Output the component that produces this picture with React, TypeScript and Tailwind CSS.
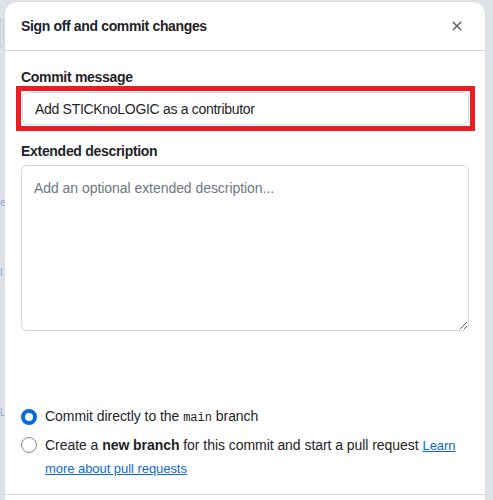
import React from 'react';

export default function App() {
  return (
    <div className="relative w-[493px] h-[500px] overflow-hidden bg-[#dfe2e6] font-['Liberation_Sans',sans-serif] text-[#1f2328]">
      {/* faded page behind the dialog */}
      <div className="absolute left-0 top-[18px] w-[4px] h-[30px] rounded-r border border-[#c9d0d8]" />
      <div className="absolute left-0 top-[195px] text-[10px] text-[#7fa5d6]">e</div>
      <div className="absolute left-0 top-[265px] text-[10px] text-[#7fa5d6]">I</div>
      <div className="absolute left-0 top-[405px] text-[10px] text-[#7fa5d6]">L</div>

      <div className="relative ml-[5px] mt-[2px] w-[480px] h-[520px] rounded-t-xl bg-white shadow-[0_0_0_1px_rgba(208,215,222,0.5)] flex flex-col">
        <div className="h-[49px] shrink-0 border-b border-[#d1d9e0] pl-4 pr-5 flex items-center justify-between">
          <h2 className="text-[14px] font-semibold tracking-[-0.35px]">Sign off and commit changes</h2>
          <svg width="16" height="16" viewBox="0 0 16 16" className="text-[#59636e]" fill="currentColor">
            <path d="M3.72 3.72a.75.75 0 0 1 1.06 0L8 6.94l3.22-3.22a.749.749 0 0 1 1.275.326.749.749 0 0 1-.215.734L9.06 8l3.22 3.22a.749.749 0 0 1-.326 1.275.749.749 0 0 1-.734-.215L8 9.06l-3.22 3.22a.751.751 0 0 1-1.042-.018.751.751 0 0 1-.018-1.042L6.94 8 3.72 4.78a.75.75 0 0 1 0-1.06Z" />
          </svg>
        </div>

        <div className="px-4 pt-[16px] flex flex-col tracking-[-0.3px]">
          <label className="text-[14px] font-semibold leading-5 mb-[5px]">Commit message</label>
          <div className="relative ml-[1px] w-[447px]">
            <input
              readOnly
              value="Add STICKnoLOGIC as a contributor"
              className="w-full h-[33px] rounded-md border border-[#d1d9e0] px-3 text-[14px] tracking-[-0.3px] outline-none"
            />
            {/* red annotation box */}
            <div className="absolute -left-[6px] -right-[6px] -top-[6px] -bottom-[6px] border-[5px] border-[#ed1c24] pointer-events-none" />
          </div>

          <label className="text-[14px] font-semibold leading-5 mt-[16px] mb-[4px]">Extended description</label>
          <textarea
            placeholder="Add an optional extended description..."
            className="w-[448px] h-[166px] rounded-md border border-[#d1d9e0] px-3 py-[12px] text-[14px] leading-5 tracking-[-0.05px] placeholder:text-[#6e7781] resize-y outline-none"
          />

          <div className="mt-[75px] flex flex-col gap-[8px] text-[14px] tracking-[-0.05px]">
            <div className="flex items-center gap-[8px]">
              <span className="w-[16px] h-[16px] rounded-full border-[4px] border-[#0969da] bg-white" />
              <span>
                Commit directly to the <code className="font-['Liberation_Mono',monospace] text-[12px] tracking-normal">main</code> branch
              </span>
            </div>
            <div className="flex items-start gap-[8px]">
              <span className="mt-[2px] shrink-0 w-[16px] h-[16px] rounded-full border border-[#818b98] bg-white" />
              <span className="leading-[22px] -mt-[1px] pr-[12px]">
                Create a <b className="font-semibold">new branch</b> for this commit and start a pull request{' '}
                <a className="text-[#0969da] underline text-[13px]">Learn more about pull requests</a>
              </span>
            </div>
          </div>
        </div>

        <div className="mt-auto mb-[27px] border-t border-[#d1d9e0]" />
      </div>
    </div>
  );
}
